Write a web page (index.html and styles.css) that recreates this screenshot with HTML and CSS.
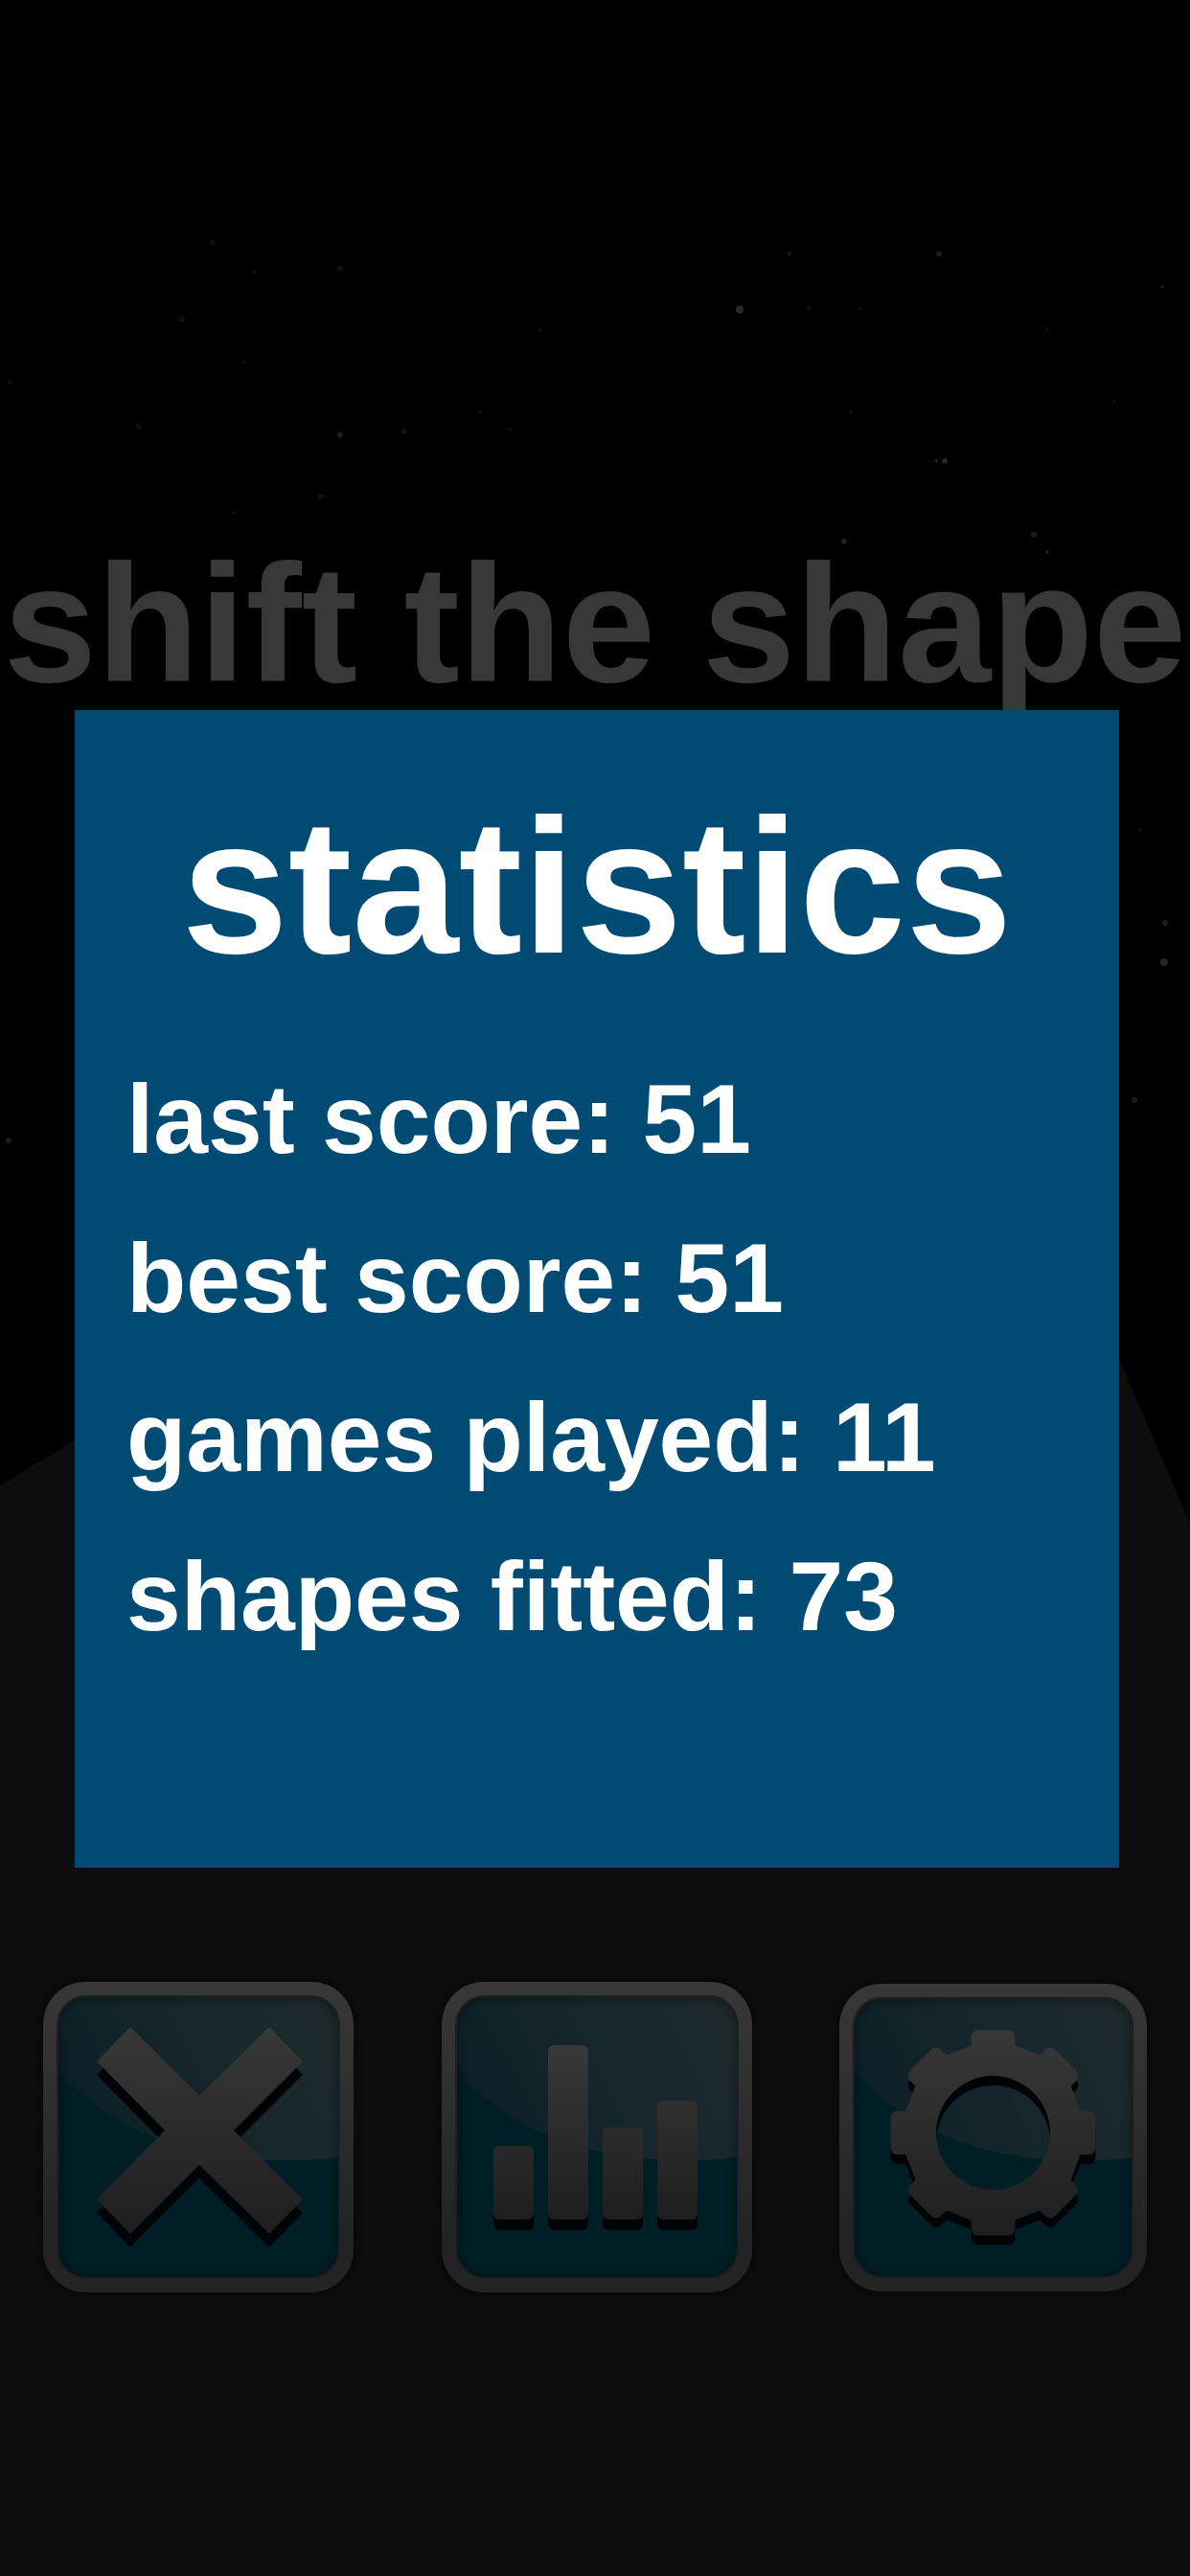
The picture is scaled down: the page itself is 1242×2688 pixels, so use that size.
FILE: index.html
```html
<!DOCTYPE html>
<html lang="en">
<head>
<meta charset="utf-8">
<meta name="viewport" content="width=device-width, initial-scale=1">
<title>shift the shape</title>
<link rel="stylesheet" href="styles.css">
</head>
<body>
<div class="screen">
  <svg class="scene" viewBox="0 0 1242 2688" preserveAspectRatio="none" aria-hidden="true">
    <path d="M0 1550 973 966 1242 1590V2688H0z" fill="#0d0d0d"/>
    <g fill="#1c1c1a">
      <circle cx="772" cy="323" r="4" fill="#2a2a2a"/>
      <circle cx="980" cy="265" r="3"/>
      <circle cx="824" cy="265" r="2"/>
      <circle cx="355" cy="454" r="3"/>
      <circle cx="986" cy="481" r="3" fill="#262626"/>
      <circle cx="977" cy="481" r="2"/>
      <circle cx="881" cy="565" r="3"/>
      <circle cx="1079" cy="558" r="3"/>
      <circle cx="1093" cy="576" r="2"/>
      <circle cx="1213" cy="299" r="2"/>
      <circle cx="1215" cy="1004" r="4" fill="#262626"/>
      <circle cx="1216" cy="963" r="3"/>
      <circle cx="1184" cy="1148" r="3"/>
      <circle cx="9" cy="1190" r="3"/>
    </g>
    <g fill="#101010">
      <circle cx="222" cy="253" r="3"/>
      <circle cx="355" cy="280" r="3"/>
      <circle cx="265" cy="284" r="2"/>
      <circle cx="190" cy="333" r="3"/>
      <circle cx="145" cy="445" r="3"/>
      <circle cx="255" cy="378" r="2"/>
      <circle cx="422" cy="450" r="3"/>
      <circle cx="532" cy="448" r="2"/>
      <circle cx="501" cy="430" r="2"/>
      <circle cx="563" cy="345" r="2"/>
      <circle cx="335" cy="518" r="3"/>
      <circle cx="244" cy="535" r="2"/>
      <circle cx="888" cy="430" r="2"/>
      <circle cx="844" cy="322" r="2"/>
      <circle cx="898" cy="322" r="2"/>
      <circle cx="1093" cy="343" r="2"/>
      <circle cx="1163" cy="419" r="2"/>
      <circle cx="10" cy="399" r="2"/>
      <circle cx="1190" cy="866" r="2"/>
    </g>
  </svg>

  <h1 class="title">shift the shape</h1>

  <section class="panel" role="dialog" aria-labelledby="panel-title">
    <h2 class="panel-title" id="panel-title">statistics</h2>
    <ul class="stats">
      <li>last score: 51</li>
      <li>best score: 51</li>
      <li>games played: 11</li>
      <li>shapes fitted: 73</li>
    </ul>
  </section>

  <nav class="actions">
    <button class="tile" type="button" aria-label="exit">
      <svg width="324" height="324" viewBox="0 0 324 324" aria-hidden="true">
        <defs>
          <linearGradient id="frame" x1="0" y1="0" x2="0" y2="1">
            <stop offset="0" stop-color="#383838"/>
            <stop offset="0.85" stop-color="#222222"/>
            <stop offset="1" stop-color="#242424"/>
          </linearGradient>
          <linearGradient id="gloss" x1="0" y1="0.4" x2="1" y2="0.1">
            <stop offset="0" stop-color="#0c2027"/>
            <stop offset="0.5" stop-color="#16272c"/>
            <stop offset="1" stop-color="#1f2a2c"/>
          </linearGradient>
          <linearGradient id="metal" gradientUnits="userSpaceOnUse" x1="0" y1="48" x2="0" y2="263">
            <stop offset="0" stop-color="#383838"/>
            <stop offset="1" stop-color="#1e1e1e"/>
          </linearGradient>
          <filter id="soft" x="-10%" y="-10%" width="120%" height="120%">
            <feGaussianBlur stdDeviation="6"/>
          </filter>
          <clipPath id="face"><rect x="15" y="15" width="294" height="294" rx="30"/></clipPath>
          <g id="plate">
            <rect width="324" height="324" rx="44" fill="url(#frame)"/>
            <g clip-path="url(#face)">
              <rect x="15" y="15" width="294" height="294" fill="#001e26"/>
              <path d="M14 87C60 150 160 200 310 183V14H14z" fill="url(#gloss)"/>
              <rect x="13" y="13" width="298" height="298" rx="32" fill="none" stroke="#08090a" stroke-opacity="0.5" stroke-width="8" filter="url(#soft)"/>
            </g>
            <rect x="15" y="15" width="294" height="294" rx="30" fill="none" stroke="#1d1f20" stroke-width="2"/>
          </g>
          <path id="cross" d="M91 47 163 119 236 47 271 83 199 155 271 227 236 263 163 191 91 263 56 227 127 155 56 83z"/>
        </defs>
        <use href="#plate"/>
        <use href="#cross" y="14" fill="#000407"/>
        <use href="#cross" fill="url(#metal)"/>
      </svg>
    </button>
    <button class="tile" type="button" aria-label="statistics">
      <svg width="324" height="324" viewBox="0 0 324 324" aria-hidden="true">
        <defs>
          <g id="bars">
            <rect x="54" y="171" width="42" height="77" rx="6"/>
            <rect x="111" y="66" width="42" height="182" rx="6"/>
            <rect x="168" y="152" width="42" height="96" rx="6"/>
            <rect x="225" y="124" width="42" height="124" rx="6"/>
          </g>
          <linearGradient id="bar-metal" gradientUnits="userSpaceOnUse" x1="0" y1="66" x2="0" y2="248">
            <stop offset="0" stop-color="#383838"/>
            <stop offset="1" stop-color="#1e1e1e"/>
          </linearGradient>
          <mask id="bar-mask"><use href="#bars" fill="#fff"/></mask>
        </defs>
        <use href="#plate"/>
        <g fill="#000407">
          <rect x="54" y="219" width="42" height="40" rx="6"/>
          <rect x="111" y="219" width="42" height="40" rx="6"/>
          <rect x="168" y="219" width="42" height="40" rx="6"/>
          <rect x="225" y="219" width="42" height="40" rx="6"/>
        </g>
        <rect width="324" height="324" fill="url(#bar-metal)" mask="url(#bar-mask)"/>
      </svg>
    </button>
    <button class="tile" type="button" aria-label="settings">
      <svg width="321" height="321" viewBox="0 0 324 324" aria-hidden="true">
        <defs>
          <rect id="tooth" x="-23" y="-108" width="46" height="60" rx="7"/>
          <mask id="gear-mask">
            <g transform="translate(162 157)" fill="#fff">
              <path d="M-23-92-49-82-82-49-92-23V23L-82 49-49 82-23 92H23L49 82 82 49 92 23V-23L82-49 49-82 23-92z"/>
              <use href="#tooth"/>
              <use href="#tooth" transform="rotate(45)"/>
              <use href="#tooth" transform="rotate(90)"/>
              <use href="#tooth" transform="rotate(135)"/>
              <use href="#tooth" transform="rotate(180)"/>
              <use href="#tooth" transform="rotate(225)"/>
              <use href="#tooth" transform="rotate(270)"/>
              <use href="#tooth" transform="rotate(315)"/>
              <circle r="60" fill="#000"/>
            </g>
          </mask>
        </defs>
        <use href="#plate"/>
        <g transform="translate(0 10)">
          <rect width="324" height="300" fill="#000407" mask="url(#gear-mask)"/>
        </g>
        <rect width="324" height="324" fill="url(#metal)" mask="url(#gear-mask)"/>
      </svg>
    </button>
  </nav>
</div>
</body>
</html>
```
FILE: styles.css
```css
* {
  box-sizing: border-box;
}

body {
  margin: 0;
  background: #0c0c0c;
  font-family: "Liberation Sans", Arial, sans-serif;
  font-weight: 700;
}

.screen {
  position: relative;
  display: flex;
  flex-direction: column;
  min-height: 100vh;
  padding-top: 561px;
  background: #000;
  overflow: hidden;
}

/* night sky and hill behind everything */
.scene {
  position: absolute;
  inset: 0;
  width: 100%;
  height: 100%;
}

.title,
.panel,
.actions {
  position: relative;
}

.title {
  margin: 0;
  color: #383838;
  font-size: 175px;
  line-height: 180px;
  text-align: center;
  white-space: nowrap;
}

.panel {
  margin: 0 74px 0 78px;
  padding: 84px 54px 200px;
  background: #004b73;
  color: #fff;
}

.panel-title {
  margin: 0 0 60px;
  font-size: 200px;
  line-height: 200px;
  text-align: center;
}

.stats {
  margin: 0;
  padding: 0;
  list-style: none;
  font-size: 102px;
  line-height: 166px;
  white-space: nowrap;
}

.actions {
  display: flex;
  justify-content: space-between;
  align-items: center;
  padding: 119px 45px;
}

.tile {
  padding: 0;
  border: 0;
  border-radius: 44px;
  background: none;
  box-shadow: 0 0 8px #050505;
  cursor: pointer;
}

.tile svg {
  display: block;
}
```
